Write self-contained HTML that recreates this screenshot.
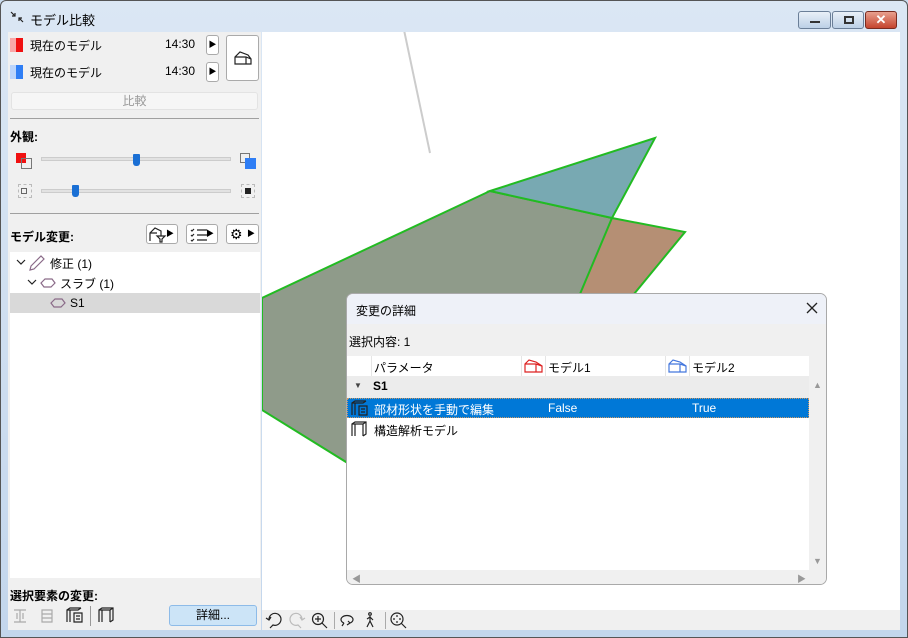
<!DOCTYPE html>
<html><head><meta charset="utf-8"><style>
*{box-sizing:border-box;margin:0;padding:0}
body{width:908px;height:638px;overflow:hidden;font-family:"Liberation Sans","Noto Sans CJK JP",sans-serif;font-size:12px;color:#000;background:#c9dbee;position:relative}
.abs{position:absolute}
.frame{left:0;top:0;width:908px;height:638px;background:linear-gradient(#dbe7f4,#c3d6ec);border:1px solid #555;border-radius:6px 6px 0 0}
.btn{border:1px solid #aaa;border-radius:3px;background:#fff}
.t{position:absolute;white-space:nowrap}
svg.i{position:absolute;fill:none;stroke:#222;stroke-width:1.2}
</style></head><body>
<div class="abs frame"></div>
<svg class="i" style="left:10px;top:11px" width="14" height="12"><path d="M1 1 L5 5 M5 2 V5 H2 M13 11 L9 7 M9 10 V7 H12"/></svg>
<div class="t" style="left:30px;top:10px;font-size:13px">モデル比較</div>
<div class="abs" style="left:798px;top:11px;width:33px;height:18px;border:1px solid #6b7f98;border-radius:3px;background:linear-gradient(#e9f0f8,#bcd0e6)"><div class="abs" style="left:11px;top:9px;width:10px;height:2px;background:#333"></div></div>
<div class="abs" style="left:832px;top:11px;width:32px;height:18px;border:1px solid #6b7f98;border-radius:3px;background:linear-gradient(#e9f0f8,#bcd0e6)"><div class="abs" style="left:11px;top:4px;width:10px;height:8px;border:2px solid #333"></div></div>
<div class="abs" style="left:865px;top:11px;width:32px;height:18px;border:1px solid #7a2b20;border-radius:3px;background:linear-gradient(#e8a08e,#c5442e);color:#fff;text-align:center;font-weight:bold;font-size:13px;line-height:16px">✕</div>

<!-- left panel -->
<div class="abs" style="left:8px;top:32px;width:253px;height:598px;background:#f0f0f0"></div>
<div class="abs" style="left:10px;top:38px;width:6px;height:14px;background:#f9a7a7"></div><div class="abs" style="left:16px;top:38px;width:7px;height:14px;background:#f01010"></div>
<div class="abs" style="left:10px;top:65px;width:6px;height:14px;background:#bcd5fb"></div><div class="abs" style="left:16px;top:65px;width:7px;height:14px;background:#2f7ef5"></div>
<div class="t" style="left:30px;top:37px">現在のモデル</div><div class="t" style="left:165px;top:37px">14:30</div>
<div class="t" style="left:30px;top:64px">現在のモデル</div><div class="t" style="left:165px;top:64px">14:30</div>
<div class="abs btn" style="left:206px;top:35px;width:13px;height:20px;font-size:8px;text-align:center;line-height:18px">▶</div>
<div class="abs btn" style="left:206px;top:62px;width:13px;height:20px;font-size:8px;text-align:center;line-height:18px">▶</div>
<div class="abs btn" style="left:226px;top:35px;width:33px;height:46px"><svg class="i" style="left:7px;top:15px" width="18" height="14"><path d="M1 13 V6 L6 1 L14 4 L17 8 V13 Z M1 6 H12 L17 8 M12 6 V13"/></svg></div>
<div class="abs" style="left:11px;top:92px;width:247px;height:18px;background:#f6f6f6;border:1px solid #e3e3e3;border-radius:3px;text-align:center;color:#999;line-height:16px">比較</div>
<div class="abs" style="left:10px;top:118px;width:249px;height:1px;background:#a0a0a0"></div>
<div class="t" style="left:10px;top:128px;font-weight:bold">外観:</div>
<div class="abs" style="left:16px;top:153px;width:10px;height:10px;background:#f01010"></div><div class="abs" style="left:21px;top:158px;width:11px;height:11px;border:1px solid #777"></div>
<div class="abs" style="left:240px;top:153px;width:10px;height:10px;border:1px solid #777"></div><div class="abs" style="left:245px;top:158px;width:11px;height:11px;background:#2f7ef5"></div>
<div class="abs" style="left:41px;top:157px;width:190px;height:4px;background:#e2e2e2;border:1px solid #ccc"></div>
<div class="abs" style="left:133px;top:154px;width:7px;height:12px;background:#1a6fd4;border-radius:1px 1px 3px 3px"></div>
<div class="abs" style="left:18px;top:184px;width:14px;height:14px;border:1px dashed #bbb"></div><div class="abs" style="left:21px;top:188px;width:6px;height:6px;border:1px solid #666"></div>
<div class="abs" style="left:241px;top:184px;width:14px;height:14px;border:1px dashed #bbb"></div><div class="abs" style="left:245px;top:188px;width:6px;height:6px;background:#222"></div>
<div class="abs" style="left:41px;top:189px;width:190px;height:4px;background:#e2e2e2;border:1px solid #ccc"></div>
<div class="abs" style="left:72px;top:185px;width:7px;height:12px;background:#1a6fd4;border-radius:1px 1px 3px 3px"></div>
<div class="abs" style="left:10px;top:213px;width:249px;height:1px;background:#a0a0a0"></div>
<div class="t" style="left:10px;top:228px;font-weight:bold">モデル変更:</div>
<div class="abs btn" style="left:146px;top:224px;width:32px;height:20px;font-size:8px;text-align:right;padding-right:3px;line-height:18px"><svg class="i" style="left:2px;top:2px" width="18" height="16"><path d="M1 14 V6 L6 1 L12 4 V9 M1 6 H8 M8 9 H16 L13 12 V15 L11 15 V12 Z"/></svg>▶</div>
<div class="abs btn" style="left:186px;top:224px;width:32px;height:20px;font-size:8px;text-align:right;padding-right:3px;line-height:18px"><svg class="i" style="left:3px;top:3px" width="18" height="14"><path d="M1 2 L2 3 L4 1 M1 7 L2 8 L4 6 M1 12 L2 13 L4 11 M7 2 H17 M7 7 H17 M7 12 H17"/></svg>▶</div>
<div class="abs btn" style="left:226px;top:224px;width:33px;height:20px;font-size:8px;text-align:right;padding-right:3px;line-height:18px"><span style="position:absolute;left:3px;top:0;font-size:14px">⚙</span>▶</div>
<div class="abs" style="left:10px;top:252px;width:250px;height:326px;background:#fff"></div>
<div class="abs" style="left:10px;top:293px;width:250px;height:20px;background:#d9d9d9"></div>
<svg class="i" style="left:16px;top:259px" width="10" height="6"><path d="M1 1 L5 5 L9 1"/></svg>
<svg class="i" style="left:29px;top:255px;stroke:#8a6a88" width="16" height="16"><path d="M1 15 L2 11 L12 1 L15 4 L5 14 Z"/></svg>
<div class="t" style="left:50px;top:255px">修正 (1)</div>
<svg class="i" style="left:27px;top:279px" width="10" height="6"><path d="M1 1 L5 5 L9 1"/></svg>
<svg class="i" style="left:40px;top:278px;stroke:#8a6a88" width="16" height="10"><path d="M1 5 L5 1 H12 L15 5 L11 9 H4 Z"/></svg>
<div class="t" style="left:60px;top:275px">スラブ (1)</div>
<svg class="i" style="left:50px;top:298px;stroke:#8a6a88" width="16" height="10"><path d="M1 5 L5 1 H12 L15 5 L11 9 H4 Z"/></svg>
<div class="t" style="left:70px;top:296px">S1</div>
<div class="t" style="left:10px;top:587px;font-weight:bold">選択要素の変更:</div>
<div class="abs" style="left:90px;top:606px;width:1px;height:20px;background:#999"></div>
<div class="abs" style="left:169px;top:605px;width:88px;height:21px;background:#cce4f7;border:1px solid #8dbbe8;border-radius:3px;text-align:center;line-height:19px">詳細...</div>
<svg class="i" style="left:13px;top:609px;stroke:#aaa" width="14" height="14"><path d="M1 1 H13 M1 13 H13 M7 1 V13 M4 4 V10 M10 4 V10"/></svg>
<svg class="i" style="left:40px;top:609px;stroke:#aaa" width="14" height="14"><path d="M2 1 H12 V13 H2 Z M2 5 H12 M2 9 H12"/></svg>
<svg class="i" style="left:66px;top:607px" width="18" height="16"><path d="M1 15 V3 L4 1 H15 M1 3 H12 L15 1 M4 3 V15 M8 6 H16 V15 H8 Z M10 9 H14 M10 12 H14"/></svg>
<svg class="i" style="left:98px;top:607px" width="18" height="16"><path d="M1 15 V3 L4 1 H15 V13 L12 15 M1 3 H12 L15 1 M12 3 V15 M4 3 V15"/></svg>

<!-- viewport -->
<div class="abs" style="left:262px;top:32px;width:638px;height:578px;background:#fff;overflow:hidden">
<svg width="638" height="578" style="position:absolute;left:0;top:0">
<line x1="142" y1="-2" x2="168" y2="121" stroke="#ccc" stroke-width="2"/>
<polygon points="0,266 228,159 350,186 320,262 84,430 0,378" fill="#8f9b8a" stroke="#22bb22" stroke-width="2"/>
<polygon points="228,159 393,106 350,186" fill="#78a9b2" stroke="#22bb22" stroke-width="2"/>
<polygon points="350,186 423,200 372,262 318,262" fill="#b58f74" stroke="#22bb22" stroke-width="2"/>
</svg>
</div>
<div class="abs" style="left:262px;top:610px;width:638px;height:20px;background:#f0f0f0"></div>
<svg class="i" style="left:265px;top:612px" width="18" height="17"><path d="M4 7 A6 6 0 1 1 8 13 L5 16 M1 6 L4 8 L6 5"/></svg>
<svg class="i" style="left:288px;top:612px;stroke:#bbb" width="18" height="17"><path d="M14 7 A6 6 0 1 0 10 13 L13 16 M17 6 L14 8 L12 5"/></svg>
<svg class="i" style="left:311px;top:612px" width="17" height="17"><circle cx="7" cy="7" r="5.5"/><path d="M11 11 L16 16 M7 4 V10 M4 7 H10"/></svg>
<div class="abs" style="left:334px;top:612px;width:1px;height:17px;background:#aaa"></div>
<svg class="i" style="left:340px;top:613px" width="16" height="14"><path d="M4 10 A6 4 0 1 1 10 10 M4 10 L2 13 M8 8 L10 10 L7 12"/></svg>
<svg class="i" style="left:365px;top:612px" width="10" height="16"><circle cx="5" cy="2" r="1.3"/><path d="M5 4 V9 L2 15 M5 9 L8 15 M2 7 L5 5 L8 8"/></svg>
<div class="abs" style="left:385px;top:612px;width:1px;height:17px;background:#aaa"></div>
<svg class="i" style="left:390px;top:612px" width="17" height="17"><circle cx="7" cy="7" r="6"/><path d="M11 11 L16 16 M7 3 V5 M7 9 V11 M3 7 H5 M9 7 H11"/></svg>

<!-- dialog -->
<div class="abs" style="left:346px;top:293px;width:481px;height:292px;background:#f0f0f0;border:1px solid #a9a9a9;border-radius:7px;overflow:hidden">
<div class="abs" style="left:0;top:0;width:481px;height:30px;background:#eef1f8"></div>
<div class="t" style="left:9px;top:8px">変更の詳細</div>
<svg class="i" style="left:459px;top:8px;stroke-width:1.3" width="12" height="12"><path d="M1 1 L11 11 M11 1 L1 11"/></svg>
<div class="t" style="left:2px;top:39px">選択内容: 1</div>
<div class="abs" style="left:0;top:62px;width:462px;height:20px;background:#fff"></div>
<div class="abs" style="left:24px;top:62px;width:1px;height:20px;background:#e5e5e5"></div>
<div class="abs" style="left:174px;top:62px;width:1px;height:20px;background:#e5e5e5"></div>
<div class="abs" style="left:198px;top:62px;width:1px;height:20px;background:#e5e5e5"></div>
<div class="abs" style="left:318px;top:62px;width:1px;height:20px;background:#e5e5e5"></div>
<div class="abs" style="left:342px;top:62px;width:1px;height:20px;background:#e5e5e5"></div>
<div class="t" style="left:27px;top:65px">パラメータ</div>
<svg class="i" style="left:177px;top:65px;stroke:#d22" width="20" height="14"><path d="M1 13 V5 L5 1 L12 3 L18 7 V13 Z M1 5 H12 L18 7 M12 5 V13"/></svg>
<div class="t" style="left:201px;top:65px">モデル1</div>
<svg class="i" style="left:321px;top:65px;stroke:#47d" width="20" height="14"><path d="M1 13 V5 L5 1 L12 3 L18 7 V13 Z M1 5 H12 L18 7 M12 5 V13"/></svg>
<div class="t" style="left:345px;top:65px">モデル2</div>
<div class="abs" style="left:0;top:82px;width:462px;height:22px;background:#ececec"></div>
<div class="t" style="left:7px;top:87px;font-size:8px;color:#444">▼</div>
<div class="t" style="left:26px;top:85px;font-weight:bold">S1</div>
<div class="abs" style="left:0;top:104px;width:462px;height:20px;background:#0078d7;border:1px dotted #c96"></div>
<svg class="i" style="left:4px;top:106px" width="18" height="16"><path d="M1 15 V3 L4 1 H15 M1 3 H12 L15 1 M4 3 V15 M8 6 H16 V15 H8 Z M10 9 H14 M10 12 H14"/></svg>
<div class="t" style="left:27px;top:107px;color:#fff">部材形状を手動で編集</div>
<div class="t" style="left:201px;top:107px;color:#fff">False</div>
<div class="t" style="left:345px;top:107px;color:#fff">True</div>
<div class="abs" style="left:0;top:124px;width:462px;height:152px;background:#fff"></div>
<svg class="i" style="left:4px;top:127px" width="18" height="16"><path d="M1 15 V3 L4 1 H15 V13 L12 15 M1 3 H12 L15 1 M12 3 V15 M4 3 V15"/></svg>
<div class="t" style="left:27px;top:128px">構造解析モデル</div>
<div class="abs" style="left:462px;top:82px;width:18px;height:194px;background:#f0f0f0"></div>
<div class="t" style="left:466px;top:86px;font-size:9px;color:#999">▲</div>
<div class="t" style="left:466px;top:262px;font-size:9px;color:#999">▼</div>
<div class="abs" style="left:0;top:276px;width:481px;height:16px;background:#f0f0f0"></div>
<div class="t" style="left:5px;top:278px;font-size:9px;color:#999">◀</div>
<div class="t" style="left:450px;top:278px;font-size:9px;color:#999">▶</div>
</div>
</body></html>
